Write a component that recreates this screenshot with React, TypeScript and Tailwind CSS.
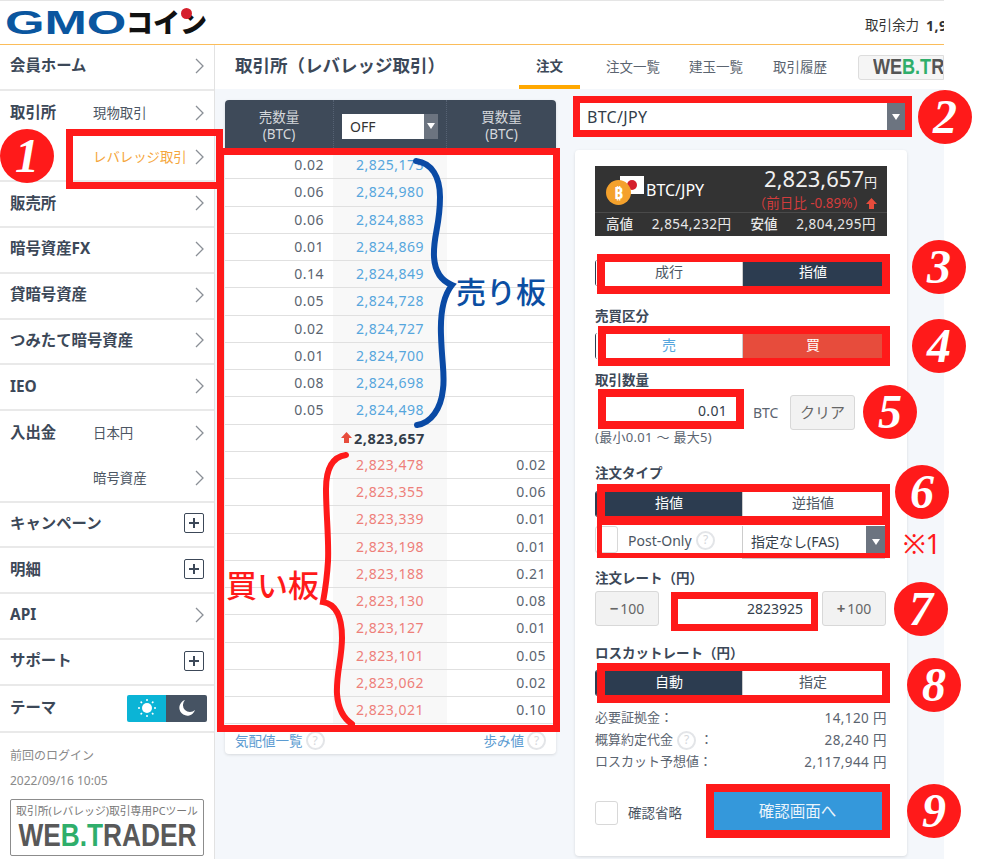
import { ReactNode } from "react";

const FONT = "font-['Noto_Sans','Noto_Sans_CJK_JP',sans-serif]";

const SELL = [
  ["0.02", "2,825,173"], ["0.06", "2,824,980"], ["0.06", "2,824,883"], ["0.01", "2,824,869"], ["0.14", "2,824,849"],
  ["0.05", "2,824,728"], ["0.02", "2,824,727"], ["0.01", "2,824,700"], ["0.08", "2,824,698"], ["0.05", "2,824,498"],
];
const BUY = [
  ["2,823,478", "0.02"], ["2,823,355", "0.06"], ["2,823,339", "0.01"], ["2,823,198", "0.01"], ["2,823,188", "0.21"],
  ["2,823,130", "0.08"], ["2,823,127", "0.01"], ["2,823,101", "0.05"], ["2,823,062", "0.02"], ["2,823,021", "0.10"],
];

const Chevron = () => (
  <svg width="9" height="16" viewBox="0 0 9 16" className="shrink-0">
    <path d="M1 1l7 7-7 7" fill="none" stroke="#8a8f96" strokeWidth="1.3" />
  </svg>
);

const Plus = () => (
  <span className="flex h-[20px] w-[20px] items-center justify-center rounded-[2px] border border-[#3c4858] text-[#3c4858]">
    <svg width="12" height="12" viewBox="0 0 12 12"><path d="M6 1v10M1 6h10" stroke="currentColor" strokeWidth="2" /></svg>
  </span>
);

const Help = ({ size = "h-[19px] w-[19px]" }: { size?: string }) => (
  <span className={`${size} inline-flex items-center justify-center rounded-full border-2 border-[#e3e5e8] text-[12px] leading-none text-[#d5d8dc]`}>?</span>
);

const NavRow = ({ label, sub, orange, right, tall }: { label?: string; sub?: string; orange?: boolean; right?: ReactNode; tall?: boolean }) => (
  <div className={`flex h-[45.75px] items-center pr-[10px] pb-[2px] pl-[10px] ${tall ? "" : "border-b-2 border-[#e9e9e9]"}`}>
    <span className="w-[83px] shrink-0 text-[15.4px] font-bold whitespace-nowrap text-[#3c4858]">{label}</span>
    <span className={`flex-1 text-[13.4px] whitespace-nowrap ${orange ? "text-[#f5a63c]" : "text-[#4c5663]"}`}>{sub}</span>
    {right ?? <Chevron />}
  </div>
);

const Toggle = ({ left, right, active, leftClass, rightClass }: { left: string; right: string; active?: "l" | "r"; leftClass?: string; rightClass?: string }) => (
  <div className="flex h-[26px] w-[288px] overflow-hidden rounded-l-[3px] border-l border-[#2c3c50] text-[14px]">
    <div className={`flex w-[146px] items-center justify-center pb-[3px] ${active === "l" ? "bg-[#2c3c50] text-white" : leftClass ?? "bg-white text-[#4c5663]"}`}>{left}</div>
    <div className={`flex flex-1 items-center justify-center border-l border-[#ccc] pb-[3px] ${active === "r" ? "bg-[#2c3c50] text-white" : rightClass ?? "bg-white text-[#4c5663]"}`}>{right}</div>
  </div>
);

const Label = ({ children, className }: { children: ReactNode; className: string }) => (
  <div className={`text-[13.5px] leading-[18px] font-bold whitespace-nowrap text-[#3c4858] ${className}`}>{children}</div>
);

const Arrow = () => (
  <span className="flex h-full items-center justify-center bg-[#6c7480]">
    <span className="h-0 w-0 border-x-[4px] border-t-[6px] border-x-transparent border-t-white" />
  </span>
);

const UpArrow = ({ className }: { className: string }) => (
  <svg width="11" height="11" viewBox="0 0 11 11" className={className}><path d="M5.5 0L11 6H8v5H3V6H0z" fill="currentColor" /></svg>
);

const GrayBtn = ({ children, className }: { children: ReactNode; className: string }) => (
  <div className={`flex h-[35px] items-center justify-center rounded-[3px] border border-[#d8d8d8] bg-[#f2f2f2] text-[#666] ${className}`}>{children}</div>
);

const Info = ({ label, value }: { label: ReactNode; value: string }) => (
  <div className="flex h-[22px] items-center justify-between text-[13px] text-[#5b6470]">
    <span className="flex items-center gap-1">{label}</span>
    <span className="text-[13.5px] tracking-[0.4px]">{value}</span>
  </div>
);

const Badge = ({ n, className }: { n: string; className: string }) => (
  <div className={`absolute flex h-[54px] w-[54px] items-center justify-center rounded-full bg-[#ff1a1a] font-['Liberation_Serif',serif] text-[48px] font-bold text-white italic ${className}`}>{n}</div>
);

const Box = ({ className }: { className: string }) => <div className={`pointer-events-none absolute border-[#ff1a1a] ${className}`} />;

export default function App() {
  return (
    <div className={`relative h-[859px] w-[1002px] overflow-hidden bg-white ${FONT}`}>
      <div className="flex h-full w-[944px] flex-col overflow-hidden border-t border-[#e5e5e5]">
        {/* header */}
        <header className="flex h-[44px] shrink-0 items-center justify-between border-b border-[#fbbd5a] bg-white pl-[8px]">
          <div className="relative flex items-center">
            <span className="-ml-[3px] w-[121px] origin-left scale-x-[1.54] font-['Liberation_Sans',sans-serif] text-[33px] leading-none font-bold text-[#0a569f]">GMO</span>
            <span className="text-[27px] leading-none font-black text-[#111]">コイン</span>
            <span className="absolute top-[2px] left-[173px] h-[11px] w-[11px] rounded-full bg-[#d5202c]" />
          </div>
          <div className="flex w-[79px] items-center gap-[7px] overflow-hidden pt-[5px] text-[13.5px] whitespace-nowrap text-[#333]">
            <span>取引余力</span>
            <span className="text-[14px] font-bold tracking-[0.5px]">1,9</span>
          </div>
        </header>

        <div className="flex flex-1">
          {/* sidebar */}
          <aside className="w-[215px] shrink-0 border-r border-[#e2e2e2] bg-white">
            <NavRow label="会員ホーム" />
            <NavRow label="取引所" sub="現物取引" tall />
            <NavRow sub="レバレッジ取引" orange />
            <NavRow label="販売所" />
            <NavRow label="暗号資産FX" />
            <NavRow label="貸暗号資産" />
            <div className="flex h-[45.75px] items-center justify-between border-b-2 border-[#e9e9e9] px-[10px] pb-[2px] text-[15.4px] font-bold text-[#3c4858]">つみたて暗号資産<Chevron /></div>
            <NavRow label="IEO" />
            <NavRow label="入出金" sub="日本円" tall />
            <NavRow sub="暗号資産" />
            <NavRow label="キャンペーン" right={<Plus />} />
            <NavRow label="明細" right={<Plus />} />
            <NavRow label="API" />
            <NavRow label="サポート" right={<Plus />} />
            <div className="flex h-[47px] items-center justify-between border-b-2 border-[#e9e9e9] pr-[7px] pl-[10px] text-[15.4px] font-bold text-[#3c4858]">
              テーマ
              <div className="flex h-[27px] w-[80px] overflow-hidden rounded-[2px]">
                <div className="flex w-[39px] items-center justify-center bg-[#0bb4d6]">
                  <svg width="20" height="20" viewBox="0 0 20 20">
                    <circle cx="10" cy="10" r="5" fill="#fff" />
                    <path d="M10 1v2M10 17v2M1 10h2M17 10h2M3.6 3.6l1.4 1.4M15 15l1.4 1.4M3.6 16.4L5 15M15 5l1.4-1.4" stroke="#fff" strokeWidth="1.5" />
                  </svg>
                </div>
                <div className="flex flex-1 items-center justify-center bg-[#465363]">
                  <svg width="18" height="18" viewBox="0 0 18 18"><path d="M7 1a8 8 0 1 0 10 10A7 7 0 0 1 7 1z" fill="#fff" /></svg>
                </div>
              </div>
            </div>
            <div className="px-[10px] pt-[14px] text-[12px] text-[#8a8a8a]">
              <div className="leading-[18px]">前回のログイン</div>
              <div className="mt-[7px] leading-[18px]">2022/09/16 10:05</div>
              <div className="mt-[9px] flex h-[57px] w-[194px] flex-col items-center overflow-hidden rounded-[2px] border border-[#8c8c8c] pt-[2px]">
                <span className="text-[10.8px] leading-[18px] whitespace-nowrap text-[#777]">取引所(レバレッジ)取引専用PCツール</span>
                <span className="scale-x-[0.82] font-['Liberation_Sans',sans-serif] text-[32px] leading-[30px] font-bold whitespace-nowrap text-[#595959]">
                  WE<span className="text-[#2fae6b]">B.T</span>RADER
                </span>
              </div>
            </div>
          </aside>

          {/* main */}
          <main className="flex-1 bg-[#f4f7fb]">
            <div className="flex h-[44px] items-center justify-between bg-white pl-[20px]">
              <h1 className="pb-[4px] text-[17.5px] font-bold whitespace-nowrap text-[#3c4858]">取引所（レバレッジ取引）</h1>
              <nav className="flex h-full items-center text-[13.5px] text-[#5b6470]">
                <span className="flex h-full w-[61px] items-center justify-center border-b-4 border-[#ffa800] pt-[2px] font-bold text-[#3c4858]">注文</span>
                <span className="ml-[26px] w-[54px] whitespace-nowrap">注文一覧</span>
                <span className="ml-[29px] w-[55px] whitespace-nowrap">建玉一覧</span>
                <span className="ml-[29px] w-[54px] whitespace-nowrap">取引履歴</span>
                <span className="ml-[31px] flex h-[25px] w-[86px] items-center overflow-hidden rounded-l-[3px] border border-[#ddd] bg-[#f5f5f5] pl-[14px]">
                  <span className="origin-left scale-x-[0.82] font-['Liberation_Sans',sans-serif] text-[22px] leading-none font-bold whitespace-nowrap text-[#555]">
                    WE<span className="text-[#2fae6b]">B.T</span>RADER
                  </span>
                </span>
              </nav>
            </div>

            <div className="flex items-start pt-[11px] pl-[10px]">
              {/* order book */}
              <section className="w-[331px] overflow-hidden rounded-[4px] bg-white shadow-[0_1px_3px_rgba(0,0,0,0.12)]">
                <div className="grid h-[52px] grid-cols-[108px_114px_109px] items-center bg-[#3e4a59] text-center text-[13.5px] leading-[17px] text-[#d5d8dc]">
                  <div>売数量<br />(BTC)</div>
                  <div className="flex h-full items-center justify-center border-x border-dotted border-[#566273]">
                    <div className="flex h-[25px] w-[96px] justify-between bg-white pl-[8px] text-[14px] leading-[25px] text-[#333]">
                      OFF
                      <span className="w-[14px]"><Arrow /></span>
                    </div>
                  </div>
                  <div>買数量<br />(BTC)</div>
                </div>
                {SELL.map(([q, p]) => (
                  <div key={p} className="grid h-[27.25px] grid-cols-[108px_114px_109px] border-b border-[#e0e0e0] text-[14px] leading-[26px] tracking-[0.5px]">
                    <div className="pr-[9px] text-right text-[#5b6470]">{q}</div>
                    <div className="bg-[#f8f8f8] pl-[23px] text-[#56a6dd]">{p}</div>
                    <div />
                  </div>
                ))}
                <div className="grid h-[27.25px] grid-cols-[108px_114px_109px] border-b border-[#e0e0e0] text-[14.5px] leading-[26px] tracking-[0.5px]">
                  <div />
                  <div className="flex items-center bg-[#f8f8f8] pl-[8px] font-bold text-[#333d4a]">
                    <UpArrow className="mr-[2px] shrink-0 text-[#e74c3c]" />2,823,657
                  </div>
                  <div />
                </div>
                {BUY.map(([p, q]) => (
                  <div key={p} className="grid h-[27.25px] grid-cols-[108px_114px_109px] border-b border-[#e0e0e0] text-[14px] leading-[26px] tracking-[0.5px]">
                    <div />
                    <div className="bg-[#f8f8f8] pl-[23px] text-[#ee7f7a]">{p}</div>
                    <div className="pr-[10px] text-right text-[#5b6470]">{q}</div>
                  </div>
                ))}
                <div className="flex h-[30px] items-start justify-between px-[10px] pt-[7px] text-[13.5px] leading-[20px] text-[#5b9bd1]">
                  <span className="flex items-start gap-[3px]">気配値一覧<Help /></span>
                  <span className="flex items-start gap-[3px]">歩み値<Help /></span>
                </div>
              </section>

              {/* order form */}
              <div className="ml-[19px] w-[332px]">
                <div className="mt-[3px] ml-[5px] flex h-[27px] w-[325px] items-center justify-between bg-white pl-[7px] text-[16px] tracking-[0.3px] text-[#333d4a]">
                  BTC/JPY
                  <span className="h-full w-[18px]"><Arrow /></span>
                </div>
                <section className="mt-[20px] h-[706px] rounded-[4px] bg-white px-[20px] pt-[16px] shadow-[0_1px_3px_rgba(0,0,0,0.12)]">
                  <div className="relative h-[70px] w-[292px] bg-[#333] text-[#e8e8e8]">
                    <div className="flex h-[47px] border-b border-[#4a4a4a]">
                      <div className="relative flex w-[113px] items-center pt-[2px] pl-[51px] text-[16px] whitespace-nowrap text-white">
                        <span className="absolute top-[10px] left-[25px] flex h-[18px] w-[24px] items-center justify-center bg-white">
                          <span className="h-[10px] w-[10px] rounded-full bg-[#d5202c]" />
                        </span>
                        <span className="absolute top-[14px] left-[11px] flex h-[25px] w-[25px] items-center justify-center rounded-full bg-[#f4a12c] text-[16px] font-bold text-white">₿</span>
                        BTC/JPY
                      </div>
                      <div className="flex-1 pr-[10px] text-right">
                        <div className="text-[22px] leading-[24px] text-[#f0f0f0]">2,823,657<span className="text-[13px]">円</span></div>
                        <div className="flex items-center justify-end text-[13.5px] leading-[18px] whitespace-nowrap text-[#d23c3c]">（前日比 -0.89%）<UpArrow className="text-[#e74c3c]" /></div>
                      </div>
                    </div>
                    <div className="flex h-[23px] items-center justify-between px-[11px] text-[13.5px] whitespace-nowrap">
                      <span className="font-medium">高値</span>
                      <span className="tracking-[0.5px]">2,854,232円</span>
                      <span className="font-medium">安値</span>
                      <span className="tracking-[0.5px]">2,804,295円</span>
                    </div>
                  </div>
                  <div className="mt-[24px]"><Toggle left="成行" right="指値" active="r" /></div>
                  <Label className="mt-[21px] mb-[8px]">売買区分</Label>
                  <Toggle left="売" right="買" leftClass="bg-white text-[#56a6dd]" rightClass="bg-[#e74c3c] text-white" />
                  <Label className="mt-[12px]">取引数量</Label>
                  <div className="mt-[6px] flex items-center">
                    <div className="h-[26px] w-[142px] pr-[10px] text-right text-[14px] leading-[22px] tracking-[0.3px] text-[#333d4a]">0.01</div>
                    <span className="ml-[16px] w-[32px] text-[14px] text-[#5b6470]">BTC</span>
                    <GrayBtn className="ml-[5px] w-[65px] text-[15px]">クリア</GrayBtn>
                  </div>
                  <div className="text-[13px] leading-[14px] tracking-[0.3px] whitespace-nowrap text-[#5b6470]">(最小0.01 〜 最大5)</div>
                  <Label className="mt-[20px] mb-[9px]">注文タイプ</Label>
                  <Toggle left="指値" right="逆指値" active="l" />
                  <div className="mt-[9px] flex h-[33px]">
                    <span className="h-[27px] w-[23px] shrink-0 rounded-[3px] border border-[#d8d8d8] bg-white" />
                    <span className="ml-[10px] w-[63px] shrink-0 text-[14px] leading-[30px] whitespace-nowrap text-[#4c5663]">Post-Only</span>
                    <span className="ml-[5px] shrink-0"><Help size="h-[19px] w-[19px] mt-[3px]" /></span>
                    <div className="ml-[27px] flex h-[33px] w-[143px] shrink-0 justify-between border-b border-l border-[#ccc] pl-[8px] text-[14px] leading-[32px] whitespace-nowrap text-[#333d4a]">
                      指定なし(FAS)
                      <span className="w-[19px]"><Arrow /></span>
                    </div>
                  </div>
                  <Label className="mt-[10px] mb-[4px]">注文レート（円）</Label>
                  <div className="flex items-center">
                    <GrayBtn className="w-[64px] gap-[2px] text-[14px]"><b className="text-[15px]">−</b>100</GrayBtn>
                    <div className="ml-[19px] w-[133px] pr-[8px] text-right text-[14px] text-[#333d4a]">2823925</div>
                    <GrayBtn className="ml-[11px] w-[64px] gap-[2px] text-[14px]"><b className="text-[15px] leading-none">+</b>100</GrayBtn>
                  </div>
                  <Label className="mt-[18px] mb-[8px]">ロスカットレート（円）</Label>
                  <Toggle left="自動" right="指定" active="l" />
                  <div className="mt-[11px] w-[292px]">
                    <Info label="必要証拠金：" value="14,120 円" />
                    <Info label={<>概算約定代金<Help />：</>} value="28,240 円" />
                    <Info label="ロスカット予想値：" value="2,117,944 円" />
                  </div>
                  <div className="mt-[18px] flex items-center">
                    <span className="mt-[5px] h-[24px] w-[23px] rounded-[3px] border border-[#d8d8d8] bg-white" />
                    <span className="mt-[5px] ml-[10px] w-[85px] text-[13.5px] text-[#4c5663]">確認省略</span>
                    <div className="flex h-[39px] w-[169px] items-center justify-center bg-[#3498db] pt-[3px] text-[15.5px] text-[#eaf4fb]">確認画面へ</div>
                  </div>
                </section>
              </div>
            </div>
          </main>
        </div>
      </div>

      {/* annotations drawn on top of the screenshot */}
      <Box className="top-[148px] left-[217px] h-[584px] w-[343px] border-[7px]" />
      <Box className="top-[129px] left-[66px] h-[60px] w-[157px] border-[7px] bg-transparent" />
      <Box className="top-[96px] left-[573px] h-[41px] w-[339px] border-[7px]" />
      <Box className="top-[254px] left-[597px] h-[40px] w-[293px] border-[8px]" />
      <Box className="top-[326px] left-[598px] h-[40px] w-[292px] border-[8px]" />
      <Box className="top-[389px] left-[598px] h-[40px] w-[146px] border-[8px]" />
      <Box className="top-[484px] left-[597px] h-[40px] w-[293px] border-[8px]" />
      <Box className="top-[517px] left-[597px] h-[41px] w-[293px] border-x-[5px] border-t-[8px] border-b-[5px]" />
      <Box className="top-[592px] left-[671px] h-[39px] w-[147px] border-[7px]" />
      <Box className="top-[663px] left-[597px] h-[40px] w-[293px] border-[8px]" />
      <Box className="top-[784px] left-[706px] h-[54px] w-[184px] border-[8px]" />

      <Badge n="1" className="top-[129px] left-[0px]" />
      <Badge n="2" className="top-[90px] left-[918px]" />
      <Badge n="3" className="top-[240px] left-[912px]" />
      <Badge n="4" className="top-[319px] left-[912px]" />
      <Badge n="5" className="top-[385px] left-[863px]" />
      <Badge n="6" className="top-[465px] left-[895px]" />
      <Badge n="7" className="top-[582px] left-[894px]" />
      <Badge n="8" className="top-[658px] left-[907px]" />
      <Badge n="9" className="top-[784px] left-[907px]" />

      <div className="absolute top-[525px] left-[903px] text-[27px] leading-[38px] whitespace-nowrap text-[#ff1a1a]">※1</div>
      <div className="absolute top-[270px] left-[456px] text-[30px] leading-[44px] font-medium whitespace-nowrap text-[#0b4ea2]">売り板</div>
      <div className="absolute top-[563px] left-[226px] text-[31px] leading-[44px] font-medium whitespace-nowrap text-[#ff1a1a]">買い板</div>

      <svg className="pointer-events-none absolute top-0 left-0" width="1002" height="859" fill="none" strokeLinecap="round" strokeWidth="6">
        <path d="M416 161c16 2 24 16 24 36 0 30-7 38-6 60 1 16 8 24 18 28-8 10-12 24-11 50 1 30 4 40 2 54-2 20-12 34-26 36" stroke="#0a4aa5" />
        <path d="M346 455c-14 2-20 14-20 34 0 24 3 50 2 72-1 18-3 30-5 41 12 2 19 14 19 36 0 20-6 36-5 56 1 14 6 24 15 30" stroke="#ff1a1a" />
      </svg>
    </div>
  );
}
